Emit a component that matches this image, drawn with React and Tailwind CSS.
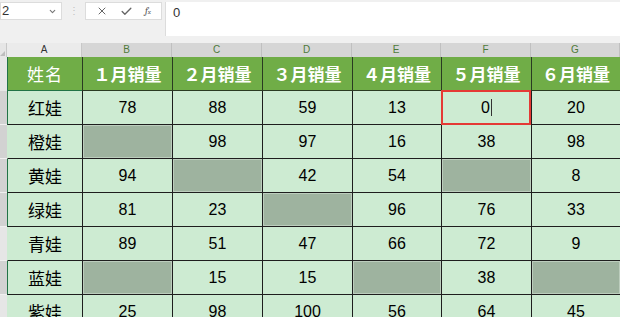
import React from "react";
import { X, Check, ChevronDown } from "lucide-react";

const months = ["１月销量", "２月销量", "３月销量", "４月销量", "５月销量", "６月销量"];
const letters = ["B", "C", "D", "E", "F", "G"];

// null = grey filled (empty) cell
const rows = [
  { name: "红娃", vals: [78, 88, 59, 13, 0, 20], hdr: "bg-[#d2d2d2]", edge: true },
  { name: "橙娃", vals: [null, 98, 97, 16, 38, 98], hdr: "bg-[#d2d2d2]", edge: false },
  { name: "黄娃", vals: [94, null, 42, 54, null, 8], hdr: "bg-[#d2d2d2]", edge: true },
  { name: "绿娃", vals: [81, 23, null, 96, 76, 33], hdr: "bg-[#d2d2d2]", edge: true },
  { name: "青娃", vals: [89, 51, 47, 66, 72, 9], hdr: "bg-[#e6e6e6]", edge: false },
  { name: "蓝娃", vals: [null, 15, 15, null, 38, null], hdr: "bg-[#d2d2d2]", edge: true },
  { name: "紫娃", vals: [25, 98, 100, 56, 64, 45], hdr: "bg-[#e6e6e6]", edge: false },
];

const cols = "grid grid-cols-[7px_75px_90px_90px_90px_89px_90px_1fr]";
const cjk = { fontFamily: '"Noto Sans CJK SC", "Noto Sans", sans-serif' };
const num = { fontFamily: '"Liberation Sans", Arial, sans-serif' };

function App() {
  return (
    <div className="w-[620px] h-[317px] overflow-hidden bg-[#f0f0f0] text-black" style={num}>
      {/* formula bar */}
      <div className="flex items-start h-[36px] pt-[2px]">
        <div className="w-[62px] h-[18px] bg-white border border-[#dcdcdc] flex items-center justify-between pl-[1px] pr-[4px] text-[13px] text-[#333]">
          <span>2</span>
          <ChevronDown size={9} strokeWidth={3} className="text-[#777]" />
        </div>
        <div className="w-[23px] h-[18px] flex items-center justify-center text-[#c0c0c0] text-[10px] leading-none">⋮</div>
        <div className="w-[77px] h-[18px] bg-white border border-[#dcdcdc] flex items-center justify-around px-1 text-[#666]">
          <X size={12} strokeWidth={2} />
          <Check size={13} strokeWidth={2.5} />
          <span className="text-[10px] italic font-serif text-[#555]">f<span className="text-[7px]">x</span></span>
        </div>
        <div className="ml-[3px] flex-1 h-[34px] bg-white border-l border-[#dcdcdc] text-[13px] text-[#333] pl-[7px] pt-[1px]">0</div>
      </div>
      <div className="h-[7px]" />
      {/* column headers */}
      <div className={`${cols} h-[14px] text-[10px] leading-[14px]`}>
        <div className="bg-[#e6e6e6] border-r border-[#c8c8c8] relative">
          <div className="absolute right-[1px] bottom-[1px] w-0 h-0 border-l-[5px] border-l-transparent border-b-[5px] border-b-[#bdbdbd]" />
        </div>
        <div className="bg-[#ebebeb] border-r border-[#c8c8c8] text-center text-[#333]">A</div>
        {letters.map((l) => (
          <div key={l} className="bg-[#d6d6d6] border-r border-[#c0c0c0] text-center text-[#4e7a3a]">{l}</div>
        ))}
      </div>
      {/* header row */}
      <div className={`${cols} h-[34px]`}>
        <div className="bg-[#e6e6e6]" />
        <div className="bg-[#70ad47] border-l border-[#217346] border-b border-[#2a3a22] flex items-center justify-center text-white text-[17px] tracking-[1px]" style={cjk}>姓名</div>
        {months.map((m) => (
          <div key={m} className="bg-[#70ad47] border-l border-[#2a3a22] border-b flex items-center justify-center text-white text-[17px] font-bold" style={cjk}>{m}</div>
        ))}
      </div>
      {/* data rows */}
      {rows.map((r, ri) => (
        <div key={r.name} className={`${cols} h-[34px]`}>
          <div className={`${r.hdr} border-b border-[#f0f0f0]`} />
          <div className={`bg-[#cdebd2] border-b border-[#1e1e1e] border-l ${r.edge ? "border-l-[#217346]" : "border-l-[#cdebd2]"} flex items-center justify-center text-[17px]`} style={cjk}>{r.name}</div>
          {r.vals.map((v, ci) => (
            <div key={ci} className="relative bg-[#cdebd2] border-l border-b border-[#1e1e1e] flex items-center justify-center text-[16px]">
              {v === null ? (
                <div className="absolute inset-0 border border-[#bccdbd] bg-[#9eb39f]" />
              ) : (
                <span>
                  {v}
                  {ri === 0 && ci === 4 && <span className="inline-block w-[1px] h-[17px] bg-[#333] align-middle ml-[1px] -mt-[2px]" />}
                </span>
              )}
              {ri === 0 && ci === 4 && (
                <div className="absolute -top-[1px] -left-[1px] right-0 -bottom-[1px] border-2 border-[#e53935]" />
              )}
            </div>
          ))}
        </div>
      ))}
    </div>
  );
}

export default App;
